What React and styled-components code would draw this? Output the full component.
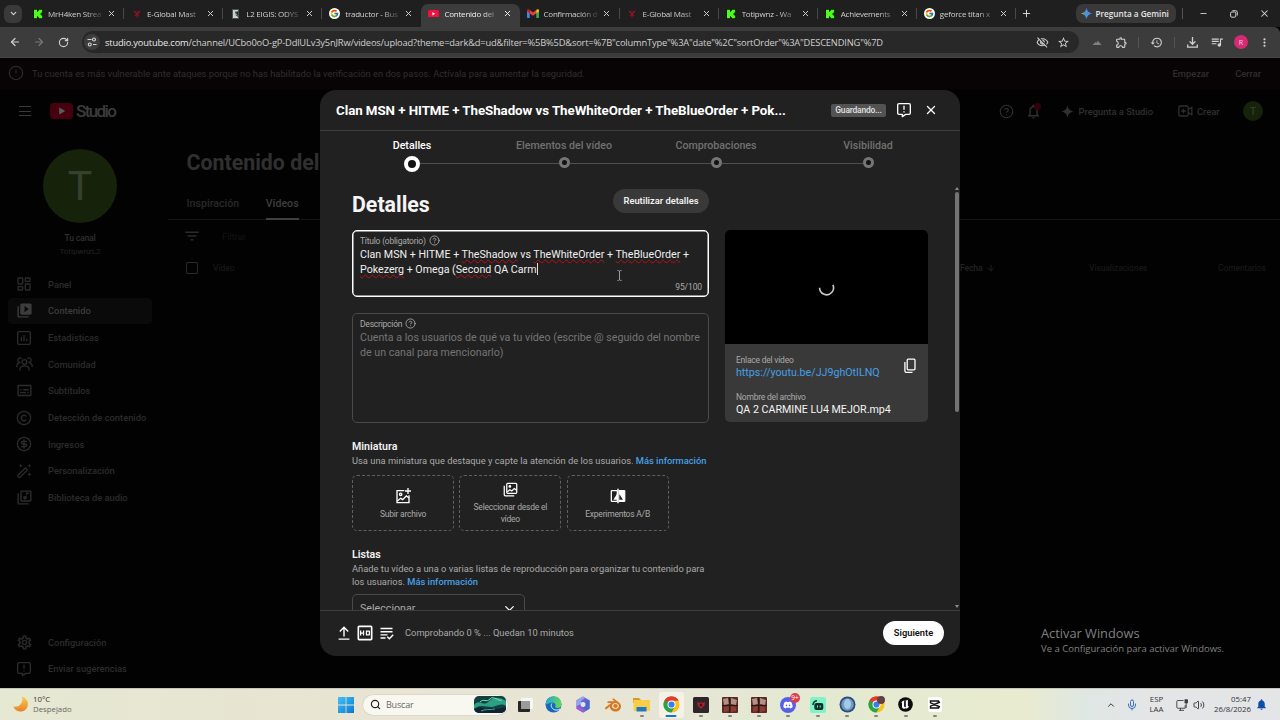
import styled, { createGlobalStyle, css } from "styled-components";
import {
  ArrowLeft,
  ArrowRight,
  ArrowDown,
  ChevronDown,
  ChevronUp,
  CircleAlert,
  CircleDollarSign,
  CircleQuestionMark,
  Copyright,
  LayoutDashboard,
  Mic,
  Minus,
  Plus,
  RotateCw,
  Search,
  Volume2,
  X,
} from "lucide-react";
import {
  MdFilterList,
  MdHistory,
  MdMoreVert,
  MdNotifications,
  MdOutlineExtension,
  MdOutlineHd,
  MdOutlineLibraryMusic,
  MdOutlineNotifications,
  MdOutlineQueueMusic,
  MdOutlineSettings,
  MdOutlineStarBorder,
  MdOutlineSubtitles,
  MdOutlineVisibilityOff,
  MdVideoLibrary,
} from "react-icons/md";
import { FcGoogle } from "react-icons/fc";
import { FaDiscord } from "react-icons/fa";
import { SiBlender } from "react-icons/si";

const TITLE =
  "Clan MSN + HITME + TheShadow vs TheWhiteOrder + TheBlueOrder + Pok...";

const URL_HOST = "studio.youtube.com";
const URL_PATH =
  '/channel/UCbo0oO-gP-DdlULv3y5nJRw/videos/upload?theme=dark&d=ud&filter=%5B%5D&sort=%7B"columnType"%3A"date"%2C"sortOrder"%3A"DESCENDING"%7D';

const tabs = [
  { icon: "kick", label: "MrH4ken Strea" },
  { icon: "eglobal", label: "E-Global Mast" },
  { icon: "l2", label: "L2 EIGIS: ODYS" },
  { icon: "google", label: "traductor - Bus" },
  { icon: "youtube", label: "Contenido del", active: true },
  { icon: "gmail", label: "Confirmación d" },
  { icon: "eglobal", label: "E-Global Mast" },
  { icon: "kick", label: "Totipwnz - Wa" },
  { icon: "kick", label: "Achievements" },
  { icon: "google", label: "geforce titan x" },
];

const steps = [
  { label: "Detalles", active: true },
  { label: "Elementos del vídeo" },
  { label: "Comprobaciones" },
  { label: "Visibilidad" },
];

/* ---------- icons ---------- */

function KickIcon() {
  return (
    <svg width="10" height="10" viewBox="0 0 10 10">
      <rect width="10" height="10" fill="#0b1a08" />
      <path
        d="M1 .8h3v2h1v-1h1v-1h3.2v2.6h-1v1h-1v1.2h1v1h1v2.6H6v-1H5v-1H4v2H1z"
        fill="#4dfb1c"
      />
    </svg>
  );
}

function EGlobalIcon() {
  return (
    <svg width="10" height="10" viewBox="0 0 10 10">
      <path
        d="M1.4 1l2 1.2L5 1.6l1.6.6 2-1.2-.4 2.6L6.8 5l.8 1.8L5 9.2 2.4 6.8 3.2 5 1.8 3.6z"
        fill="#5c141c"
      />
      <path d="M2 2l3 3 3-3M3.4 7L5 5.4 6.6 7" stroke="#8f1f2a" fill="none" strokeWidth=".9" />
    </svg>
  );
}

function L2Icon() {
  return (
    <svg width="9" height="10" viewBox="0 0 9 10">
      <rect x="1" width="7" height="10" fill="#4c544f" />
      <path d="M2 1h5v1.4H4v2h2.4v1.4H4L7 8v1H2z" fill="#c9d2cc" />
      <path d="M5 5l2-3v4z" fill="#1d2220" />
    </svg>
  );
}

function YoutubeIcon({ width = 11, fill = "#f4113f" }) {
  return (
    <svg width={width} height={width * 0.7} viewBox="0 0 22 15.4">
      <rect width="22" height="15.4" rx="3.6" fill={fill} />
      <path d="M8.8 4.4l5.8 3.3-5.8 3.3z" fill="currentColor" />
    </svg>
  );
}

function GmailIcon() {
  return (
    <svg width="12" height="9" viewBox="0 0 24 18">
      <path d="M0 3v13.4A1.6 1.6 0 0 0 1.6 18H5.5V7z" fill="#4285f4" />
      <path d="M24 3v13.4a1.6 1.6 0 0 1-1.6 1.6h-3.9V7z" fill="#34a853" />
      <path d="M5.5 8.6V2l6.5 5 6.5-5v6.6L12 13.5z" fill="#ea4335" />
      <path d="M0 2.6v2.2l5.5 4V2L4 .8C2.4-.4 0 .6 0 2.6z" fill="#c5221f" />
      <path d="M24 2.6v2.2l-5.5 4V2L20 .8c1.6-1.2 4-.2 4 1.8z" fill="#fbbc04" />
    </svg>
  );
}

const favicons = {
  kick: <KickIcon />,
  eglobal: <EGlobalIcon />,
  l2: <L2Icon />,
  google: (
    <GoogleDisc>
      <FcGoogle size={9} />
    </GoogleDisc>
  ),
  youtube: <YoutubeIcon />,
  gmail: <GmailIcon />,
};

function GoogleDisc({ children }) {
  return <Disc>{children}</Disc>;
}

function TuneIcon() {
  return (
    <svg width="10" height="10" viewBox="0 0 20 20" fill="none" stroke="#d5d5d5" strokeWidth="2.2">
      <path d="M1 5h8M12 15h7" />
      <circle cx="14" cy="5" r="3" />
      <circle cx="5.5" cy="15" r="3" />
    </svg>
  );
}

function GeminiIcon() {
  return (
    <svg width="11" height="11" viewBox="0 0 24 24">
      <defs>
        <linearGradient id="gem" x1="0" y1=".6" x2="1" y2=".4">
          <stop offset="0" stopColor="#e9b13b" />
          <stop offset=".3" stopColor="#4fa38f" />
          <stop offset=".5" stopColor="#4a8cf5" />
          <stop offset=".8" stopColor="#4a8cf5" />
          <stop offset="1" stopColor="#e2554c" />
        </linearGradient>
      </defs>
      <path
        d="M12 0c1.4 6.9 5.1 10.600 12 12-6.9 1.400-10.600 5.100-12 12-1.400-6.900-5.100-10.600-12-12C6.900 10.600 10.600 6.900 12 0z"
        fill="url(#gem)"
      />
    </svg>
  );
}

function RestoreIcon() {
  return (
    <svg width="8" height="8" viewBox="0 0 8 8" fill="none" stroke="#d2d2d2" strokeWidth="1">
      <rect x=".6" y="2" width="5.2" height="5.2" rx="1.2" />
      <path d="M2.4.7h3.300a1.600 1.600 0 0 1 1.600 1.600v3.200" />
    </svg>
  );
}

function PeakIcon() {
  return (
    <svg width="10" height="5" viewBox="0 0 22 12">
      <path d="M0 12L7 5l2 2 4-5 9 10z" fill="#808080" />
    </svg>
  );
}

function DownloadIcon() {
  return (
    <svg width="11" height="11" viewBox="0 0 11 11" fill="none" stroke="currentColor" strokeWidth="1.3">
      <path d="M5.500 0v7M2.600 4.400l2.900 2.900 2.900-2.900M.7 7.500v2.700h9.600V7.500" />
    </svg>
  );
}

function FeedbackIcon({ size = 16, strokeWidth = 2 }) {
  return (
    <svg
      width={size}
      height={size}
      viewBox="0 0 24 24"
      fill="none"
      stroke="currentColor"
      strokeWidth={strokeWidth}
      strokeLinejoin="round"
    >
      <path d="M4.500 2.500h15a2 2 0 0 1 2 2v12a2 2 0 0 1-2 2h-5L9.500 22v-3.500h-5a2 2 0 0 1-2-2v-12a2 2 0 0 1 2-2z" />
      <path d="M12 5.800v6M12 13.800v2" />
    </svg>
  );
}

function StatsIcon() {
  return (
    <svg width="16" height="16" viewBox="0 0 24 24" fill="none" stroke="currentColor" strokeWidth="2">
      <rect x="2.500" y="2.500" width="19" height="19" rx="2" />
      <path d="M8 10v7M12 7v10M16 13v4" />
    </svg>
  );
}

function CommunityIcon() {
  return (
    <svg width="17" height="16" viewBox="0 0 25.500 24" fill="none" stroke="currentColor" strokeWidth="1.800">
      <circle cx="12.700" cy="9" r="3.600" />
      <path d="M5.500 22c0-4.800 3-7.300 7.200-7.300s7.200 2.500 7.200 7.300" />
      <path d="M8.600 4.200A3.300 3.300 0 1 0 5.500 9.500C2.800 10.500 1 12.800 1 16.500M16.900 4.200A3.300 3.300 0 1 1 20 9.500c2.700 1 4.500 3.300 4.500 7" />
    </svg>
  );
}

function WandIcon() {
  return (
    <svg width="16" height="16" viewBox="0 0 24 24" fill="none" stroke="currentColor" strokeWidth="1.900">
      <path d="M3.500 18L14 7.500l3 3L6.500 21a2.100 2.100 0 0 1-3-3z" />
      <g fill="currentColor" stroke="none">
        <path d="M7 1l1 2.200L10.200 4 8 5 7 7.200 6 5l-2.200-1L6 3.200zM20 1l1 2.200 2.200.8L21 5l-1 2.200L19 5l-2.200-1 2.200-.8zM20 14l1 2.200 2.200.8-2.200 1-1 2.200-1-2.200-2.200-1 2.200-.8z" />
      </g>
    </svg>
  );
}

function SparkIcon() {
  return (
    <svg width="13" height="13" viewBox="0 0 24 24">
      <path
        d="M12 0c1.200 7.600 4.400 10.800 12 12-7.600 1.200-10.800 4.400-12 12C10.800 16.400 7.600 13.200 0 12 7.600 10.800 10.800 7.600 12 0z"
        fill="currentColor"
      />
    </svg>
  );
}

function CreateIcon() {
  return (
    <svg width="15" height="12" viewBox="0 0 22 18" fill="none" stroke="currentColor" strokeWidth="1.900">
      <rect x="1" y="1.500" width="14" height="15" rx="2" />
      <path d="M8 5.500v7M4.500 9h7M15 6.500l5.500-3v11l-5.500-3" />
    </svg>
  );
}

function CopyIcon() {
  return (
    <svg width="12" height="16" viewBox="0 0 12 16" fill="none" stroke="#fff" strokeWidth="1.300">
      <rect x="3.200" y="1.200" width="7.800" height="10.600" rx="1" />
      <path d="M.9 4v9a1.400 1.400 0 0 0 1.400 1.400h6.200" />
    </svg>
  );
}

function Spinner() {
  return (
    <svg width="17" height="17" viewBox="0 0 17 17" fill="none" stroke="#c9c9c9" strokeWidth="1.600">
      <path d="M1.600 7.700a7 7 0 0 0 12.300 4.600 7 7 0 0 0 1-7.400" />
    </svg>
  );
}

function ImagePlusIcon() {
  return (
    <svg width="16" height="16" viewBox="0 0 24 24" fill="none" stroke="#fff" strokeWidth="2">
      <path d="M14 4H3v18h18V11" />
      <path d="M19.500 0v9M15 4.500h9" />
      <circle cx="8.500" cy="9.500" r="1.800" />
      <path d="M3.500 19.500l5-4 3 2L17 12l4 3" />
    </svg>
  );
}

function ImagesIcon() {
  return (
    <svg width="15" height="15" viewBox="0 0 24 24" fill="none" stroke="#fff" strokeWidth="2">
      <rect x="6" y="2" width="16" height="16" rx="1.500" />
      <path d="M2 6v14.500A1.500 1.500 0 0 0 3.500 22H18" />
      <path d="M7 15.500l4-3 3 2 4-4 3.500 2.500" />
      <circle cx="11" cy="7" r="1.200" />
    </svg>
  );
}

function CompareIcon() {
  return (
    <svg width="16" height="16" viewBox="0 0 24 24">
      <rect x="2" y="4" width="9" height="16" rx="1" fill="none" stroke="#fff" strokeWidth="2" />
      <path d="M13 3h8.500a1.500 1.500 0 0 1 1.500 1.500v15a1.500 1.500 0 0 1-1.500 1.500H13z" fill="#fff" />
      <path d="M14 9l5.500 8.500H14z" fill="#212121" />
      <path d="M10.500 9v8.500H5z" fill="#fff" />
      <path d="M12 1v22" stroke="#fff" strokeWidth="2.200" />
    </svg>
  );
}

function UploadIcon() {
  return (
    <svg width="12" height="14" viewBox="0 0 12 14" fill="none" stroke="#fff" strokeWidth="1.400">
      <path d="M6 10.500V1.400M1.800 5.400L6 1.200l4.200 4.200M.6 13.100h10.800" />
    </svg>
  );
}

function ChecklistIcon() {
  return (
    <svg width="14" height="13" viewBox="0 0 14 13" fill="none" stroke="#fff" strokeWidth="1.400">
      <path d="M.5 1.500h12M.5 4.700h12M.5 7.900h7M.5 11h5M7.200 9.700l2.200 2.100 3.800-4" />
    </svg>
  );
}

function IBeam() {
  return (
    <svg width="5" height="11" viewBox="0 0 5 11" fill="none" stroke="#aaa" strokeWidth=".9">
      <path d="M.4.600h1.300l.8.600.8-.6h1.300M2.500 1v9M.4 10.400h1.300l.8-.6.800.6h1.300" />
    </svg>
  );
}

function StudioLogo() {
  return (
    <LogoRow>
      <YoutubeIcon width={23} fill="#47000e" />
      <span>Studio</span>
    </LogoRow>
  );
}

/* taskbar drawings */

function MoonIcon() {
  return (
    <svg width="15" height="16" viewBox="0 0 15 16">
      <defs>
        <linearGradient id="moon" x1="0" y1="0" x2="0" y2="1">
          <stop offset="0" stopColor="#f8cf52" />
          <stop offset="1" stopColor="#ea8124" />
        </linearGradient>
      </defs>
      <path d="M8.600.6A7.500 7.500 0 1 1 .3 10.300 7 7 0 0 0 8.600.600z" fill="url(#moon)" />
    </svg>
  );
}

function StartIcon() {
  return (
    <svg width="16" height="16" viewBox="0 0 16 16">
      <defs>
        <linearGradient id="win" x1="0" y1="0" x2="1" y2="1">
          <stop offset="0" stopColor="#41c3f3" />
          <stop offset="1" stopColor="#0a78d2" />
        </linearGradient>
      </defs>
      <path d="M0 0h7.600v7.600H0zM8.400 0H16v7.600H8.400zM0 8.400h7.600V16H0zM8.400 8.400H16V16H8.400z" fill="url(#win)" />
    </svg>
  );
}

function AuroraIcon() {
  return (
    <svg width="32" height="17" viewBox="0 0 32 17">
      <defs>
        <clipPath id="aur">
          <rect width="32" height="17" rx="5" />
        </clipPath>
      </defs>
      <g clipPath="url(#aur)">
        <rect width="32" height="17" fill="#12403f" />
        <path d="M0 9c6-7 9 2 14-3S24 0 32 5v5c-6-4-10 1-15 1S6 8 0 13z" fill="#2d9f83" />
        <path d="M6 6c4-4 6 1 10-3s8 3 12 1" stroke="#7fe0b5" fill="none" />
        <path d="M0 13l6-2 5 2 6-1 7 1 8-2v6H0z" fill="#102333" />
        <path d="M7 15c4-2 9-1 14-2" stroke="#4aa192" fill="none" />
      </g>
    </svg>
  );
}

function TaskViewIcon() {
  return (
    <svg width="16" height="16" viewBox="0 0 16 16">
      <rect x="4" y="1" width="12" height="11" rx="1" fill="#f6f6f4" />
      <rect x="1" y="4" width="12" height="11" rx="1" fill="#262626" />
      <path d="M4 4h9v8H4z" fill="#9b9b98" />
    </svg>
  );
}

function EdgeIcon() {
  return (
    <svg width="17" height="17" viewBox="0 0 17 17">
      <defs>
        <linearGradient id="edge" x1="0" y1="0" x2="1" y2=".3">
          <stop offset="0" stopColor="#1f9fe0" />
          <stop offset="1" stopColor="#62d65a" />
        </linearGradient>
      </defs>
      <circle cx="8.500" cy="8.500" r="8" fill="#1568bb" />
      <path d="M.5 8.500a8 8 0 0 1 16-.6c0 3-2.200 4-4.200 4-1.600 0-2.600-.7-2-1.700.9-1.500-.4-3.800-3-3.800-3 0-5 2-6.800 2.100z" fill="url(#edge)" />
      <path d="M6.800 7.500c-1.600 2.500.4 6.300 4.200 6.600 1.600.1 3-.4 4-1.200" stroke="#e9f2f5" strokeWidth="1" fill="none" />
    </svg>
  );
}

function CopilotIcon() {
  return (
    <svg width="16" height="17" viewBox="0 0 16 17">
      <path d="M8 .5l6.500 3.800v8.400L8 16.500l-6.500-3.800V4.300z" fill="#6f62d8" />
      <path d="M8 .5L1.500 4.300v6L6 8V5l4-3z" fill="#8fa6ee" />
      <path d="M14.500 4.300v8.400L8 16.500 6 13l5-2.500V5z" fill="#3f6fc9" />
      <path d="M1.500 10.300v2.400L8 16.500l3-2-5-3z" fill="#a25ad6" />
      <path d="M8 5.800l2.300 1.300v2.800L8 11.200 5.700 9.900V7.100z" fill="#e6e4dc" />
    </svg>
  );
}

function FolderIcon() {
  return (
    <svg width="17" height="15" viewBox="0 0 17 15">
      <path d="M0 1h6l2 2h8v3H0z" fill="#d99a24" />
      <path d="M.5 3H16a1 1 0 0 1 1 1v9a1 1 0 0 1-1 1H1.500a1 1 0 0 1-1-1z" fill="#f8cd47" />
      <path d="M3.500 10h10v4.500h-10z" fill="#2177c2" />
    </svg>
  );
}

function ChromeIcon({ badge }) {
  return (
    <svg width="17" height="17" viewBox="0 0 34 34">
      <circle cx="17" cy="17" r="16" fill="#fbc116" />
      <path d="M3.100 9A16 16 0 0 0 17 33l7-12-7-4z" fill="#28a34a" />
      <path d="M3.100 9A16 16 0 0 1 30.900 9H17v8z" fill="#e33b2e" />
      <path d="M3.100 9L10 21l7-4V9z" fill="#28a34a" />
      <path d="M3.100 9A16 16 0 0 1 30.900 9H17l-7 4z" fill="#e33b2e" />
      <circle cx="17" cy="17" r="8" fill="#fff" />
      <circle cx="17" cy="17" r="6.200" fill="#3b7de9" />
      {badge && <circle cx="26" cy="8" r="8" fill="#6b3a38" />}
      {badge && <circle cx="27" cy="7" r="4" fill="#4c4a52" />}
    </svg>
  );
}

function BloodIcon() {
  return (
    <svg width="16" height="16" viewBox="0 0 16 16">
      <rect width="16" height="16" rx="1.500" fill="#2d2628" />
      <path d="M4 5l2.500 1L8 5l1.500 1L12 5l-.6 3.400L8 12 4.600 8.400z" fill="#b41f2c" />
      <circle cx="8" cy="8" r="1.400" fill="#3a1218" />
    </svg>
  );
}

function GameIcon() {
  return (
    <svg width="16" height="16" viewBox="0 0 16 16">
      <rect width="16" height="16" rx="1" fill="#5d2a26" />
      <path d="M1 2l5-1 1 6-5 1zM9 1l6 2-1 5-5-1z" fill="#b09088" />
      <path d="M2 10l5-1v5l-5 1zM9 9l5 1v4l-5 1z" fill="#8d3c33" />
      <path d="M7.500 0v16M0 8.500h16" stroke="#2a1716" strokeWidth="1.200" />
    </svg>
  );
}

function StreamlabsIcon() {
  return (
    <svg width="16" height="16" viewBox="0 0 16 16">
      <rect width="16" height="16" rx="2.500" fill="#7ef3c8" />
      <path d="M3 8a4.500 4.500 0 0 1 4-4.300" stroke="#103028" strokeWidth="1.500" fill="none" />
      <rect x="4.300" y="6" width="9" height="7" rx="2" fill="#103028" />
      <path d="M7.500 8.500v2M10.200 8.500v2" stroke="#7ef3c8" />
    </svg>
  );
}

function BlueDiscIcon() {
  return (
    <svg width="17" height="17" viewBox="0 0 17 17">
      <circle cx="8.500" cy="8.500" r="8" fill="#2c4d77" />
      <circle cx="8.500" cy="8.500" r="6.200" fill="#6f9cc6" />
      <ellipse cx="8.500" cy="8" rx="3.500" ry="5" fill="#a5c8e4" />
    </svg>
  );
}

function UnrealIcon() {
  return (
    <svg width="15" height="15" viewBox="0 0 15 15">
      <circle cx="7.500" cy="7.500" r="7.300" fill="#0d0d0d" />
      <path
        d="M3 6.200c.6-1.600 1.800-2.500 3.600-3-.4.500-.5.900-.5 1.500v4.600c0 .8.800 1.100 1.700.6V4.700c0-.7-.2-1-.5-1.300 1.200.2 2-.1 3-.9-.5.700-.4 1.200-.4 2v4.300c0 .6.500.7 1.300.2-.7 1.500-1.700 2.200-2.600 2.700l-.8-.7c-.5.600-1 .8-1.900.8-1.200-.2-1.900-.9-1.900-2V5.800c0-.6-.4-.4-1 .4z"
        fill="#fff"
      />
    </svg>
  );
}

function CapcutIcon() {
  return (
    <svg width="14" height="15" viewBox="0 0 14 15">
      <rect width="14" height="15" rx="2" fill="#fff" />
      <path d="M10.500 5.200V4H2.500v1.800L12 10M10.500 9.800V11H2.500V9.200L12 5" stroke="#111" strokeWidth="1.400" fill="none" />
    </svg>
  );
}

function NetworkIcon() {
  return (
    <svg width="12" height="12" viewBox="0 0 12 12" fill="none" stroke="#3a3a3a" strokeWidth=".9">
      <path d="M7.500 1.500H1.800a1 1 0 0 0-1 1v5.700a1 1 0 0 0 1 1h7.400V6M3 11.300h5M4.500 9.300v2" />
      <rect x="9" y=".8" width="2.400" height="3" fill="#3a3a3a" />
      <path d="M10.200 4v5" />
    </svg>
  );
}

const taskbarApps = [
  { id: "view", icon: <TaskViewIcon /> },
  { id: "edge", icon: <EdgeIcon /> },
  { id: "copilot", icon: <CopilotIcon /> },
  { id: "blender", icon: <SiBlender size={16} color="#d9761c" /> },
  { id: "files", icon: <FolderIcon />, open: true },
  { id: "chrome", icon: <ChromeIcon />, open: true, active: true },
  { id: "eglobal", icon: <BloodIcon />, open: true },
  { id: "l2a", icon: <GameIcon />, open: true },
  { id: "l2b", icon: <GameIcon />, open: true },
  { id: "discord", open: true, badge: "9+" },
  { id: "streamlabs", icon: <StreamlabsIcon />, open: true },
  { id: "disc", icon: <BlueDiscIcon />, open: true },
  { id: "chrome2", icon: <ChromeIcon badge />, open: true },
  { id: "unreal", icon: <UnrealIcon />, open: true },
  { id: "capcut", icon: <CapcutIcon />, open: true },
];

const navItems = [
  { icon: <LayoutDashboard size={16} />, label: "Panel" },
  { icon: <MdVideoLibrary size={17} />, label: "Contenido", active: true },
  { icon: <StatsIcon />, label: "Estadísticas" },
  { icon: <CommunityIcon />, label: "Comunidad" },
  { icon: <MdOutlineSubtitles size={17} />, label: "Subtítulos" },
  { icon: <Copyright size={16} />, label: "Detección de contenido" },
  { icon: <CircleDollarSign size={16} />, label: "Ingresos" },
  { icon: <WandIcon />, label: "Personalización" },
  { icon: <MdOutlineLibraryMusic size={17} />, label: "Biblioteca de audio" },
];

/* ---------- sections ---------- */

function BrowserChrome() {
  return (
    <>
      <TabStrip>
        <TabSearch>
          <ChevronDown size={9} strokeWidth={3} />
        </TabSearch>
        {tabs.map((tab, i) => (
          <Tab
            key={i}
            $active={tab.active}
            $divider={!tab.active && !tabs[i + 1]?.active}
          >
            <Favicon>{favicons[tab.icon]}</Favicon>
            <TabLabel>{tab.label}</TabLabel>
            <X size={9} strokeWidth={2.6} />
          </Tab>
        ))}
        <Slot $w={22}>
          <Plus size={11} strokeWidth={2.2} />
        </Slot>
        <GeminiButton>
          <GeminiIcon />
          Pregunta a Gemini
        </GeminiButton>
        <Slot $w={13}>
          <Divider />
        </Slot>
        <Slot $w={28}>
          <Minus size={9} strokeWidth={2.4} />
        </Slot>
        <Slot $w={33}>
          <RestoreIcon />
        </Slot>
        <Slot $w={29}>
          <X size={11} strokeWidth={2.2} />
        </Slot>
      </TabStrip>
      <Toolbar>
        <Slot $w={24}>
          <ArrowLeft size={12} strokeWidth={2.4} />
        </Slot>
        <Slot $w={24} $dim>
          <ArrowRight size={12} strokeWidth={2.4} />
        </Slot>
        <Slot $w={24}>
          <RotateCw size={11} strokeWidth={2.5} />
        </Slot>
        <AddressBar>
          <SiteInfo>
            <TuneIcon />
          </SiteInfo>
          <Address>
            <b>{URL_HOST}</b>
            {URL_PATH}
          </Address>
          <Slot $w={22}>
            <MdOutlineVisibilityOff size={13} />
          </Slot>
          <Slot $w={21}>
            <MdOutlineStarBorder size={13} />
          </Slot>
        </AddressBar>
        <Slot $w={24}>
          <PeakIcon />
        </Slot>
        <Slot $w={24}>
          <MdOutlineExtension size={13} />
        </Slot>
        <Slot $w={11}>
          <Divider />
        </Slot>
        <Slot $w={24}>
          <MdHistory size={13} />
        </Slot>
        <Slot $w={12}>
          <Divider />
        </Slot>
        <Slot $w={24}>
          <DownloadIcon />
        </Slot>
        <Slot $w={26}>
          <MdOutlineQueueMusic size={14} />
        </Slot>
        <Slot $w={22}>
          <ProfileDot>R</ProfileDot>
        </Slot>
        <Slot $w={24}>
          <MdMoreVert size={13} />
        </Slot>
      </Toolbar>
    </>
  );
}

function Sidebar() {
  return (
    <SideNav>
      <ChannelAvatar>T</ChannelAvatar>
      <ChannelLabel>Tu canal</ChannelLabel>
      <ChannelName>TotipwnzL2</ChannelName>
      {navItems.map((item) => (
        <NavItem key={item.label} $active={item.active}>
          <NavIcon>{item.icon}</NavIcon>
          {item.label}
        </NavItem>
      ))}
      <NavSpacer />
      <NavItem>
        <NavIcon>
          <MdOutlineSettings size={17} />
        </NavIcon>
        Configuración
      </NavItem>
      <NavItem>
        <NavIcon>
          <FeedbackIcon />
        </NavIcon>
        Enviar sugerencias
      </NavItem>
    </SideNav>
  );
}

function StudioPage() {
  return (
    <Page>
      <Banner>
        <CircleAlert size={16} strokeWidth={1.6} />
        <BannerText>
          Tu cuenta es más vulnerable ante ataques porque no has habilitado la
          verificación en dos pasos. Actívala para aumentar la seguridad.
        </BannerText>
        <BannerAction>Empezar</BannerAction>
        <BannerAction>Cerrar</BannerAction>
      </Banner>
      <Masthead>
        <MenuLines />
        <StudioLogo />
        <MastheadActions>
          <Slot $w={27}>
            <CircleQuestionMark size={15} strokeWidth={1.8} />
          </Slot>
          <Slot $w={27}>
            <MdOutlineNotifications size={17} />
            <BellDot />
          </Slot>
          <AskStudio>
            <SparkIcon />
            Pregunta a Studio
          </AskStudio>
          <CreateButton>
            <CreateIcon />
            Crear
          </CreateButton>
          <SmallAvatar>T</SmallAvatar>
        </MastheadActions>
      </Masthead>
      <Columns>
        <Sidebar />
        <Main>
          <PageTitle>Contenido del canal</PageTitle>
          <PageTabs>
            <PageTab>Inspiración</PageTab>
            <PageTab $active>Vídeos</PageTab>
          </PageTabs>
          <FilterRow>
            <MdFilterList size={18} />
            <span>Filtrar</span>
          </FilterRow>
          <TableHead>
            <Checkbox />
            <span>Vídeo</span>
            <DateHead>
              Fecha <ArrowDown size={10} />
            </DateHead>
            <span>Visualizaciones</span>
            <span>Comentarios</span>
          </TableHead>
        </Main>
      </Columns>
    </Page>
  );
}

function UploadDialog() {
  return (
    <Dialog>
      <DialogHeader>
        <DialogTitle>{TITLE}</DialogTitle>
        <SavingChip>Guardando...</SavingChip>
        <FeedbackIcon />
        <X size={14} strokeWidth={2.2} />
      </DialogHeader>
      <Stepper>
        {steps.map((step) => (
          <Step key={step.label} $active={step.active}>
            {step.label}
            <StepTrack>
              <StepDot $active={step.active} />
            </StepTrack>
          </Step>
        ))}
      </Stepper>
      <DialogBody>
        <FormColumn>
          <HeadingRow>
            <Heading>Detalles</Heading>
            <ReuseButton>Reutilizar detalles</ReuseButton>
          </HeadingRow>
          <TitleField>
            <FieldLabel>
              Título (obligatorio) <CircleQuestionMark size={11} strokeWidth={1.9} />
            </FieldLabel>
            <FieldText>
              Clan MSN + HITME + <Typo>TheShadow</Typo> vs{" "}
              <Typo>TheWhiteOrder</Typo> + <Typo>TheBlueOrder</Typo> +<br />
              <Typo>Pokezerg</Typo> + Omega (<Typo>Second</Typo> QA Carm
              <Caret />
            </FieldText>
            <Counter>95/100</Counter>
            <Pointer>
              <IBeam />
            </Pointer>
          </TitleField>
          <DescriptionField>
            <FieldLabel>
              Descripción <CircleQuestionMark size={11} strokeWidth={1.9} />
            </FieldLabel>
            <FieldText $placeholder>
              Cuenta a los usuarios de qué va tu vídeo (escribe @ seguido del
              nombre
              <br />
              de un canal para mencionarlo)
            </FieldText>
          </DescriptionField>
          <SectionTitle>Miniatura</SectionTitle>
          <SectionText>
            Usa una miniatura que destaque y capte la atención de los usuarios.{" "}
            <MoreLink>Más información</MoreLink>
          </SectionText>
          <ThumbRow>
            <ThumbOption>
              <ImagePlusIcon />
              Subir archivo
            </ThumbOption>
            <ThumbOption>
              <ImagesIcon />
              Seleccionar desde el vídeo
            </ThumbOption>
            <ThumbOption>
              <CompareIcon />
              Experimentos A/B
            </ThumbOption>
          </ThumbRow>
          <SectionTitle>Listas</SectionTitle>
          <SectionText>
            Añade tu vídeo a una o varias listas de reproducción para organizar
            tu contenido para
            <br />
            los usuarios. <MoreLink>Más información</MoreLink>
          </SectionText>
          <SelectBox>
            Seleccionar
            <ChevronDown size={15} strokeWidth={2} color="#fff" />
          </SelectBox>
        </FormColumn>
        <PreviewCard>
          <Player>
            <Spinner />
          </Player>
          <PreviewInfo>
            <div>
              <InfoLabel>Enlace del vídeo</InfoLabel>
              <VideoLink>https://youtu.be/JJ9ghOtILNQ</VideoLink>
              <InfoLabel>Nombre del archivo</InfoLabel>
              <FileName>QA 2 CARMINE LU4 MEJOR.mp4</FileName>
            </div>
            <CopyIcon />
          </PreviewInfo>
        </PreviewCard>
        <Scrollbar>
          <ScrollArrow />
          <ScrollThumb />
          <ScrollArrow $down />
        </Scrollbar>
      </DialogBody>
      <DialogFooter>
        <UploadIcon />
        <MdOutlineHd size={20} color="#fff" />
        <ChecklistIcon />
        <Progress>Comprobando 0 % ... Quedan 10 minutos</Progress>
        <NextButton>Siguiente</NextButton>
      </DialogFooter>
    </Dialog>
  );
}

function Taskbar() {
  return (
    <Bar>
      <Weather>
        <MoonIcon />
        <div>
          10°C
          <small>Despejado</small>
        </div>
      </Weather>
      <StartIcon />
      <SearchPill>
        <Search size={11} strokeWidth={2.6} color="#222" />
        <span>Buscar</span>
        <AuroraIcon />
      </SearchPill>
      <Apps>
        {taskbarApps.map((app) => (
          <AppCell key={app.id} $active={app.active} $open={app.open}>
            {app.icon || (
              <DiscordDisc>
                <FaDiscord size={10} />
              </DiscordDisc>
            )}
            {app.badge && <Badge>{app.badge}</Badge>}
          </AppCell>
        ))}
      </Apps>
      <Tray>
        <Slot $w={21}>
          <ChevronUp size={10} strokeWidth={2.4} />
        </Slot>
        <Slot $w={21}>
          <Mic size={12} color="#3d6fb4" />
        </Slot>
        <TrayText $w={29}>
          ESP
          <br />
          LAA
        </TrayText>
        <Slot $w={22}>
          <NetworkIcon />
        </Slot>
        <Slot $w={12}>
          <Volume2 size={12} strokeWidth={1.8} />
        </Slot>
        <TrayText $w={46} $right>
          05:47
          <br />
          26/8/2026
        </TrayText>
        <Slot $w={20}>
          <MdNotifications size={13} color="#0c4fa8" />
        </Slot>
      </Tray>
    </Bar>
  );
}

export default function App() {
  return (
    <>
      <GlobalStyle />
      <Screen>
        <BrowserChrome />
        <StudioPage />
        <Taskbar />
        <UploadDialog />
        <Watermark>
          Activar Windows
          <small>Ve a Configuración para activar Windows.</small>
        </Watermark>
      </Screen>
    </>
  );
}

/* ---------- styles ---------- */

const segoe = css`
  font-family: "Open Sans", "Noto Sans", sans-serif;
`;

const caption = css`
  font-size: 8.5px;
  letter-spacing: -0.22px;
`;

const GlobalStyle = createGlobalStyle`
  * {
    box-sizing: border-box;
  }
  body {
    margin: 0;
    background: #000;
    font-family: Roboto, "Liberation Sans", sans-serif;
    overflow: hidden;
  }
  svg {
    display: block;
    flex: none;
  }
`;

const Screen = styled.div`
  position: relative;
  display: flex;
  flex-direction: column;
  width: 1280px;
  height: 720px;
  overflow: hidden;
`;

const Slot = styled.div`
  position: relative;
  display: flex;
  flex: none;
  align-items: center;
  justify-content: center;
  width: ${({ $w }) => $w}px;
  opacity: ${({ $dim }) => ($dim ? 0.4 : 1)};
`;

const Divider = styled.i`
  width: 1px;
  height: 11px;
  background: #545454;
`;

const TabStrip = styled.div`
  ${segoe}
  display: flex;
  flex: none;
  align-items: center;
  height: 27px;
  padding-left: 4px;
  background: #1f1f1f;
  color: #d5d5d5;
`;

const TabSearch = styled.div`
  display: grid;
  place-items: center;
  width: 18px;
  height: 18px;
  margin-right: 3px;
  border-radius: 6px;
  background: #3a3a3a;
`;

const Tab = styled.div`
  position: relative;
  display: flex;
  align-items: center;
  flex: none;
  width: 99.1px;
  height: 23px;
  margin-top: 4px;
  padding: 0 0 4px 6px;
  border-radius: 7px 7px 0 0;
  background: ${({ $active }) => ($active ? "#3c3c3c" : "transparent")};
  color: ${({ $active }) => ($active ? "#eee" : "#d0d0d0")};
  ${({ $divider }) =>
    $divider &&
    css`
      &::after {
        content: "";
        position: absolute;
        right: 0;
        top: 4px;
        width: 1px;
        height: 11px;
        background: #484848;
      }
    `}
`;

const Favicon = styled.span`
  display: grid;
  place-items: center;
  width: 13px;
  height: 12px;
  color: #fff;
`;

const Disc = styled.span`
  display: grid;
  place-items: center;
  width: 11px;
  height: 11px;
  border-radius: 50%;
  background: #fff;
`;

const TabLabel = styled.span`
  width: 54px;
  margin: 0 5px 0 4px;
  white-space: nowrap;
  font-size: 8px;
  line-height: 12px;
  letter-spacing: -0.22px;
  mask-image: linear-gradient(90deg, #000 70%, rgba(0, 0, 0, 0.15));
`;

const GeminiButton = styled.div`
  display: flex;
  align-items: center;
  gap: 3px;
  width: 100px;
  height: 19px;
  margin-left: 38.5px;
  padding-left: 5px;
  border-radius: 7px;
  background: #393939;
  color: #e6e6e6;
  font-size: 8.2px;
  font-weight: 600;
  white-space: nowrap;
`;

const Toolbar = styled.div`
  ${segoe}
  display: flex;
  flex: none;
  align-items: center;
  height: 31px;
  padding-left: 3px;
  border-bottom: 1px solid #474747;
  border-top-right-radius: 6px;
  background: #3c3c3c;
  color: #d0d0d0;
`;

const AddressBar = styled.div`
  display: flex;
  align-items: center;
  width: 997px;
  height: 22px;
  margin: 0 6px 0 7px;
  padding: 0 5px 0 2px;
  border-radius: 11px;
  background: #282828;
`;

const SiteInfo = styled.div`
  display: grid;
  place-items: center;
  width: 16px;
  height: 16px;
  border-radius: 50%;
  background: #3d3d3d;
`;

const Address = styled.div`
  flex: 1;
  margin-left: 5px;
  color: #cfcfcf;
  font-size: 9.33px;
  letter-spacing: -0.18px;
  white-space: nowrap;
  b {
    color: #e8e8e8;
    font-weight: 400;
  }
`;

const ProfileDot = styled.div`
  display: grid;
  place-items: center;
  width: 14px;
  height: 14px;
  border-radius: 50%;
  background: #d62a72;
  color: #f3d5e0;
  font-size: 7px;
`;

const Page = styled.div`
  display: flex;
  flex-direction: column;
  flex: 1;
  min-height: 0;
  background: #020202;
  color: #303030;
`;

const Banner = styled.div`
  display: flex;
  align-items: center;
  height: 32px;
  padding: 0 19px 2px 8px;
  background: #080405;
  color: #302d2d;
  font-size: 9.33px;
`;

const BannerText = styled.span`
  flex: 1;
  margin-left: 8px;
`;

const BannerAction = styled.span`
  margin-left: 26px;
  font-weight: 500;
`;

const Masthead = styled.header`
  display: flex;
  align-items: center;
  height: 42px;
  padding: 0 17px 0 19px;
`;

const MenuLines = styled.i`
  width: 12px;
  height: 10px;
  margin-right: 19px;
  background: linear-gradient(#3a3a3a, #3a3a3a) 0 50% / 100% 1px no-repeat;
  border: solid #3a3a3a;
  border-width: 1px 0;
`;

const LogoRow = styled.div`
  display: flex;
  align-items: center;
  gap: 3px;
  color: #5c5c5c;
  span {
    color: #3c3c3c;
    font-size: 17px;
    font-weight: 500;
    letter-spacing: -1.6px;
  }
`;

const MastheadActions = styled.div`
  display: flex;
  align-items: center;
  margin-left: auto;
  font-size: 9.33px;
  font-weight: 500;
`;

const BellDot = styled.i`
  position: absolute;
  right: 6px;
  top: 0;
  width: 7px;
  height: 7px;
  border-radius: 50%;
  background: #33000a;
`;

const AskStudio = styled.div`
  display: flex;
  align-items: center;
  gap: 5px;
  width: 131px;
  padding-left: 13.5px;
`;

const CreateButton = styled.div`
  display: flex;
  align-items: center;
  gap: 4px;
  width: 65px;
`;

const SmallAvatar = styled.div`
  display: grid;
  place-items: center;
  width: 20px;
  height: 20px;
  border-radius: 50%;
  background: #16230a;
  color: #333c2e;
  font-size: 10px;
`;

const Columns = styled.div`
  display: flex;
  flex: 1;
  min-height: 0;
`;

const SideNav = styled.nav`
  display: flex;
  flex-direction: column;
  align-items: center;
  width: 160px;
  padding: 17px 8px 6px;
  font-size: 9.33px;
  font-weight: 500;
`;

const ChannelAvatar = styled.div`
  display: grid;
  flex: none;
  place-items: center;
  width: 74px;
  height: 74px;
  border-radius: 50%;
  background: #16230a;
  color: #35402f;
  font-size: 41px;
  font-weight: 400;
`;

const ChannelLabel = styled.div`
  margin-top: 9px;
  line-height: 13px;
  font-size: 8.6px;
  letter-spacing: -0.2px;
`;

const ChannelName = styled.div`
  margin-bottom: 12px;
  line-height: 14px;
  font-size: 8px;
  font-weight: 400;
  color: #222;
`;

const NavItem = styled.div`
  display: flex;
  align-items: center;
  flex: none;
  width: 144px;
  height: 26.67px;
  border-radius: 4px;
  background: ${({ $active }) => ($active ? "#0a0a0a" : "transparent")};
  color: ${({ $active }) => ($active ? "#3c3c3c" : "#2c2c2c")};
  white-space: nowrap;
`;

const NavIcon = styled.span`
  display: grid;
  place-items: center;
  width: 32px;
  margin-right: 8px;
`;

const NavSpacer = styled.div`
  flex: 1;
`;

const Main = styled.main`
  flex: 1;
  margin-left: 8px;
  min-width: 0;
`;

const PageTitle = styled.h1`
  margin: 15px 0 0 18.5px;
  font-size: 21.33px;
  line-height: 32px;
  font-weight: 700;
  color: #303030;
`;

const PageTabs = styled.div`
  display: flex;
  gap: 26.5px;
  height: 41px;
  padding: 11px 0 0 18.5px;
  border-bottom: 1px solid #141414;
  font-size: 10.67px;
  font-weight: 500;
`;

const PageTab = styled.div`
  height: 30px;
  padding-top: 7px;
  color: ${({ $active }) => ($active ? "#3f3f3f" : "#292929")};
  border-bottom: ${({ $active }) => ($active ? "2px solid #3f3f3f" : "none")};
`;

const FilterRow = styled.div`
  display: flex;
  align-items: center;
  gap: 21px;
  height: 32px;
  padding-left: 15px;
  font-size: 9.33px;
  color: #2b2b2b;
  span {
    color: #121212;
  }
`;

const TableHead = styled.div`
  display: grid;
  grid-template-columns: 27px 747px 129px 129px 1fr;
  align-items: center;
  height: 31px;
  padding-left: 18px;
  font-size: 8.5px;
  font-weight: 500;
  letter-spacing: -0.1px;
  color: #171717;
`;

const DateHead = styled.div`
  display: flex;
  align-items: center;
  gap: 4px;
  color: #242424;
`;

const Checkbox = styled.i`
  width: 12px;
  height: 12px;
  border: 1px solid #2b2b2b;
  border-radius: 1px;
`;

const Dialog = styled.section`
  position: absolute;
  left: 320px;
  top: 90px;
  display: flex;
  flex-direction: column;
  width: 640px;
  height: 566px;
  border-radius: 16px;
  overflow: hidden;
  background: #212121;
  color: #aaa;
`;

const DialogHeader = styled.header`
  display: flex;
  align-items: center;
  flex: none;
  height: 41px;
  padding: 0 22px 0 16px;
  border-bottom: 1px solid #3f3f3f;
  color: #fff;
`;

const DialogTitle = styled.h2`
  width: 495px;
  margin: 0;
  font-size: 13.33px;
  font-weight: 700;
  white-space: nowrap;
  letter-spacing: -0.06px;
`;

const SavingChip = styled.span`
  ${caption}
  display: grid;
  place-items: center;
  flex: none;
  width: 55px;
  height: 13px;
  margin-right: 10px;
  border-radius: 2px;
  background: #535353;
  color: #ddd;
  font-weight: 600;
  & + svg {
    margin-right: 12px;
  }
`;

const Stepper = styled.div`
  display: grid;
  grid-template-columns: repeat(4, 152px);
  flex: none;
  height: 56px;
  padding: 8px 16px 0;
`;

const Step = styled.div`
  display: flex;
  flex-direction: column;
  align-items: center;
  font-size: 10.67px;
  line-height: 14px;
  font-weight: 500;
  color: ${({ $active }) => ($active ? "#fff" : "#717171")};
  &:not(:last-child) > div::after {
    content: "";
    flex: 1;
    height: 1px;
    background: #505050;
  }
  &:not(:first-child) > div::before {
    content: "";
    flex: 1;
    height: 1px;
    background: #505050;
  }
  &:first-child > div {
    padding-left: 68px;
  }
  &:last-child > div {
    padding-right: 70.5px;
  }
`;

const StepTrack = styled.div`
  display: flex;
  align-items: center;
  width: 152px;
  height: 21px;
`;

const StepDot = styled.i`
  flex: none;
  width: ${({ $active }) => ($active ? 16 : 11)}px;
  height: ${({ $active }) => ($active ? 16 : 11)}px;
  margin-bottom: ${({ $active }) => ($active ? 0 : 2)}px;
  border: ${({ $active }) => ($active ? "4px solid #fff" : "3px solid #757575")};
  border-radius: 50%;
  background: #121212;
`;

const DialogBody = styled.div`
  display: flex;
  flex: 1;
  align-items: flex-start;
  min-height: 0;
  overflow: hidden;
  padding-left: 32px;
`;

const FormColumn = styled.div`
  flex: none;
  width: 357px;
  margin-right: 16px;
`;

const HeadingRow = styled.div`
  display: flex;
  justify-content: space-between;
  height: 43px;
`;

const Heading = styled.h1`
  margin: 0;
  color: #f5f5f5;
  font-size: 21.33px;
  line-height: 35px;
  font-weight: 700;
`;

const ReuseButton = styled.div`
  display: grid;
  place-items: center;
  width: 96px;
  height: 24px;
  margin-top: 2px;
  padding-bottom: 1px;
  border-radius: 12px;
  background: #393939;
  color: #f1f1f1;
  font-size: 9.33px;
  font-weight: 600;
`;

const Field = styled.div`
  position: relative;
  padding: 4px 7px;
  border: 1px solid #4a4a4a;
  border-radius: 5px;
`;

const TitleField = styled(Field)`
  height: 67px;
  border-color: #fff;
  box-shadow: inset 0 0 0 0.5px #fff;
`;

const DescriptionField = styled(Field)`
  height: 110px;
  margin-top: 16px;
`;

const FieldLabel = styled.div`
  ${caption}
  display: flex;
  align-items: center;
  gap: 3px;
  height: 11px;
`;

const FieldText = styled.div`
  margin-top: 2px;
  color: ${({ $placeholder }) => ($placeholder ? "#757575" : "#efefef")};
  font-size: 10.67px;
  line-height: 14.67px;
  white-space: nowrap;
`;

const Typo = styled.span`
  text-decoration: underline wavy #b80f1a 1px;
  text-underline-offset: 0.5px;
  text-decoration-skip-ink: none;
`;

const Caret = styled.i`
  display: inline-block;
  width: 1px;
  height: 12px;
  background: #ddd;
  vertical-align: -2px;
`;

const Counter = styled.div`
  ${caption}
  margin-top: 5px;
  margin-right: -1px;
  text-align: right;
  line-height: 10px;
  letter-spacing: -0.1px;
`;

const Pointer = styled.div`
  position: absolute;
  left: 264px;
  top: 39px;
`;

const SectionTitle = styled.h3`
  margin: 16.6px 0 0;
  color: #f1f1f1;
  font-size: 10.67px;
  line-height: 14px;
  font-weight: 600;
`;

const SectionText = styled.p`
  margin: 0;
  font-size: 9.33px;
  line-height: 13.3px;
  white-space: nowrap;
`;

const MoreLink = styled.span`
  color: #45a0e6;
  font-weight: 500;
`;

const ThumbRow = styled.div`
  display: flex;
  gap: 5.3px;
  margin-top: 8.1px;
`;

const ThumbOption = styled.div`
  ${caption}
  display: flex;
  flex-direction: column;
  align-items: center;
  justify-content: center;
  gap: 4px;
  width: 102px;
  height: 56px;
  padding: 2px 10px 0;
  border: 1px dashed #606060;
  border-radius: 5px;
  line-height: 12px;
  text-align: center;
`;

const SelectBox = styled.div`
  display: flex;
  align-items: center;
  justify-content: space-between;
  width: 173px;
  height: 29px;
  margin-top: 6px;
  padding: 0 7px;
  border: 1px solid #4a4a4a;
  border-radius: 5px;
  font-size: 10.67px;
`;

const PreviewCard = styled.div`
  flex: none;
  width: 203px;
  height: 192px;
  margin-top: 43px;
  border-radius: 5px;
  overflow: hidden;
  background: #393939;
`;

const Player = styled.div`
  display: grid;
  place-items: center;
  height: 114px;
  padding-top: 2px;
  background: #000;
`;

const PreviewInfo = styled.div`
  display: flex;
  justify-content: space-between;
  padding: 10px 12.5px 0 11px;
  svg {
    margin-top: 4px;
  }
`;

const InfoLabel = styled.div`
  ${caption}
  line-height: 12px;
`;

const VideoLink = styled.div`
  margin-bottom: 12px;
  color: #45a0e6;
  font-size: 10.67px;
  line-height: 13px;
`;

const FileName = styled.div`
  color: #f4f4f4;
  font-size: 10.67px;
  line-height: 13px;
  white-space: nowrap;
`;

const Scrollbar = styled.div`
  display: flex;
  flex-direction: column;
  align-items: center;
  width: 6px;
  height: 423px;
  margin-left: auto;
`;

const ScrollThumb = styled.i`
  width: 4px;
  height: 220px;
  margin-bottom: auto;
  border-radius: 2px;
  background: #737373;
`;

const ScrollArrow = styled.i`
  margin: ${({ $down }) => ($down ? "0 0 2px" : "0 0 2px")};
  border: 2px solid transparent;
  ${({ $down }) =>
    $down
      ? "border-top: 3px solid #8c8c8c; border-bottom: 0;"
      : "border-bottom: 3px solid #8c8c8c; border-top: 0;"}
`;

const DialogFooter = styled.footer`
  display: flex;
  align-items: center;
  flex: none;
  height: 46px;
  padding: 0 16px 1px 18px;
  border-top: 1px solid #3f3f3f;
  svg:nth-of-type(2) {
    margin: 0 5px 0 5px;
  }
`;

const Progress = styled.span`
  flex: 1;
  margin-left: 11px;
  padding-bottom: 1px;
  font-size: 9.33px;
`;

const NextButton = styled.div`
  display: grid;
  place-items: center;
  width: 61px;
  height: 24px;
  padding-bottom: 1px;
  border-radius: 12px;
  background: #fff;
  color: #111;
  font-size: 9.33px;
  font-weight: 600;
`;

const Watermark = styled.div`
  ${segoe}
  position: absolute;
  left: 1041px;
  top: 625px;
  color: #818181;
  font-size: 12.8px;
  line-height: 17px;
  white-space: nowrap;
  small {
    display: block;
    font-size: 9.5px;
    line-height: 13px;
  }
`;

const Bar = styled.footer`
  ${segoe}
  display: flex;
  flex: none;
  align-items: center;
  height: 32px;
  padding-left: 13px;
  border-top: 1px solid #c5c5bb;
  background: linear-gradient(
    90deg,
    #e5e8d2 0,
    #e9e4d3 30%,
    #e7e5d6 50%,
    #e3e9d2 62%,
    #e8ebcf 80%,
    #dfe7e4 85%,
    #e4e5e7 90%
  );
  color: #333;
`;

const Weather = styled.div`
  display: flex;
  align-items: center;
  gap: 5px;
  width: 325px;
  padding-bottom: 1px;
  font-size: 7.8px;
  line-height: 10.5px;
  small {
    display: block;
    color: #666;
    font-size: 7.8px;
  }
`;

const SearchPill = styled.div`
  display: flex;
  align-items: center;
  width: 145px;
  height: 20px;
  margin-left: 9px;
  padding: 0 2px 0 7px;
  border-radius: 10px;
  background: #f8f7f0;
  box-shadow: 0 0 0 0.5px #cfcdc0;
  span {
    flex: 1;
    margin-left: 5px;
    color: #666;
    font-size: 9px;
    letter-spacing: -0.2px;
  }
`;

const Apps = styled.div`
  display: flex;
  margin-left: 2px;
`;

const AppCell = styled.div`
  position: relative;
  display: grid;
  place-items: center;
  width: 25px;
  height: 26px;
  margin: 0 2.17px;
  border-radius: 3px;
  background: ${({ $active }) => ($active ? "#f4f2e8" : "transparent")};
  ${({ $open, $active }) =>
    $open &&
    css`
      &::after {
        content: "";
        position: absolute;
        left: 50%;
        bottom: 1px;
        width: ${$active ? 11 : 4}px;
        height: 2px;
        border-radius: 1px;
        background: ${$active ? "#1673c5" : "#85847c"};
        transform: translateX(-50%);
      }
    `}
`;

const DiscordDisc = styled.div`
  display: grid;
  place-items: center;
  width: 16px;
  height: 16px;
  border-radius: 50%;
  background: #5560e6;
  color: #fff;
`;

const Badge = styled.span`
  position: absolute;
  right: 1px;
  top: 1px;
  width: 10px;
  height: 10px;
  border-radius: 5px;
  background: #d83f4c;
  color: #fff;
  font-size: 6.5px;
  line-height: 10px;
  text-align: center;
`;

const Tray = styled.div`
  display: flex;
  align-items: center;
  margin-left: auto;
  margin-right: 9px;
`;

const TrayText = styled.div`
  width: ${({ $w }) => $w}px;
  padding-bottom: 1px;
  text-align: ${({ $right }) => ($right ? "right" : "center")};
  font-size: 7.8px;
  line-height: 10.5px;
  white-space: nowrap;
`;
